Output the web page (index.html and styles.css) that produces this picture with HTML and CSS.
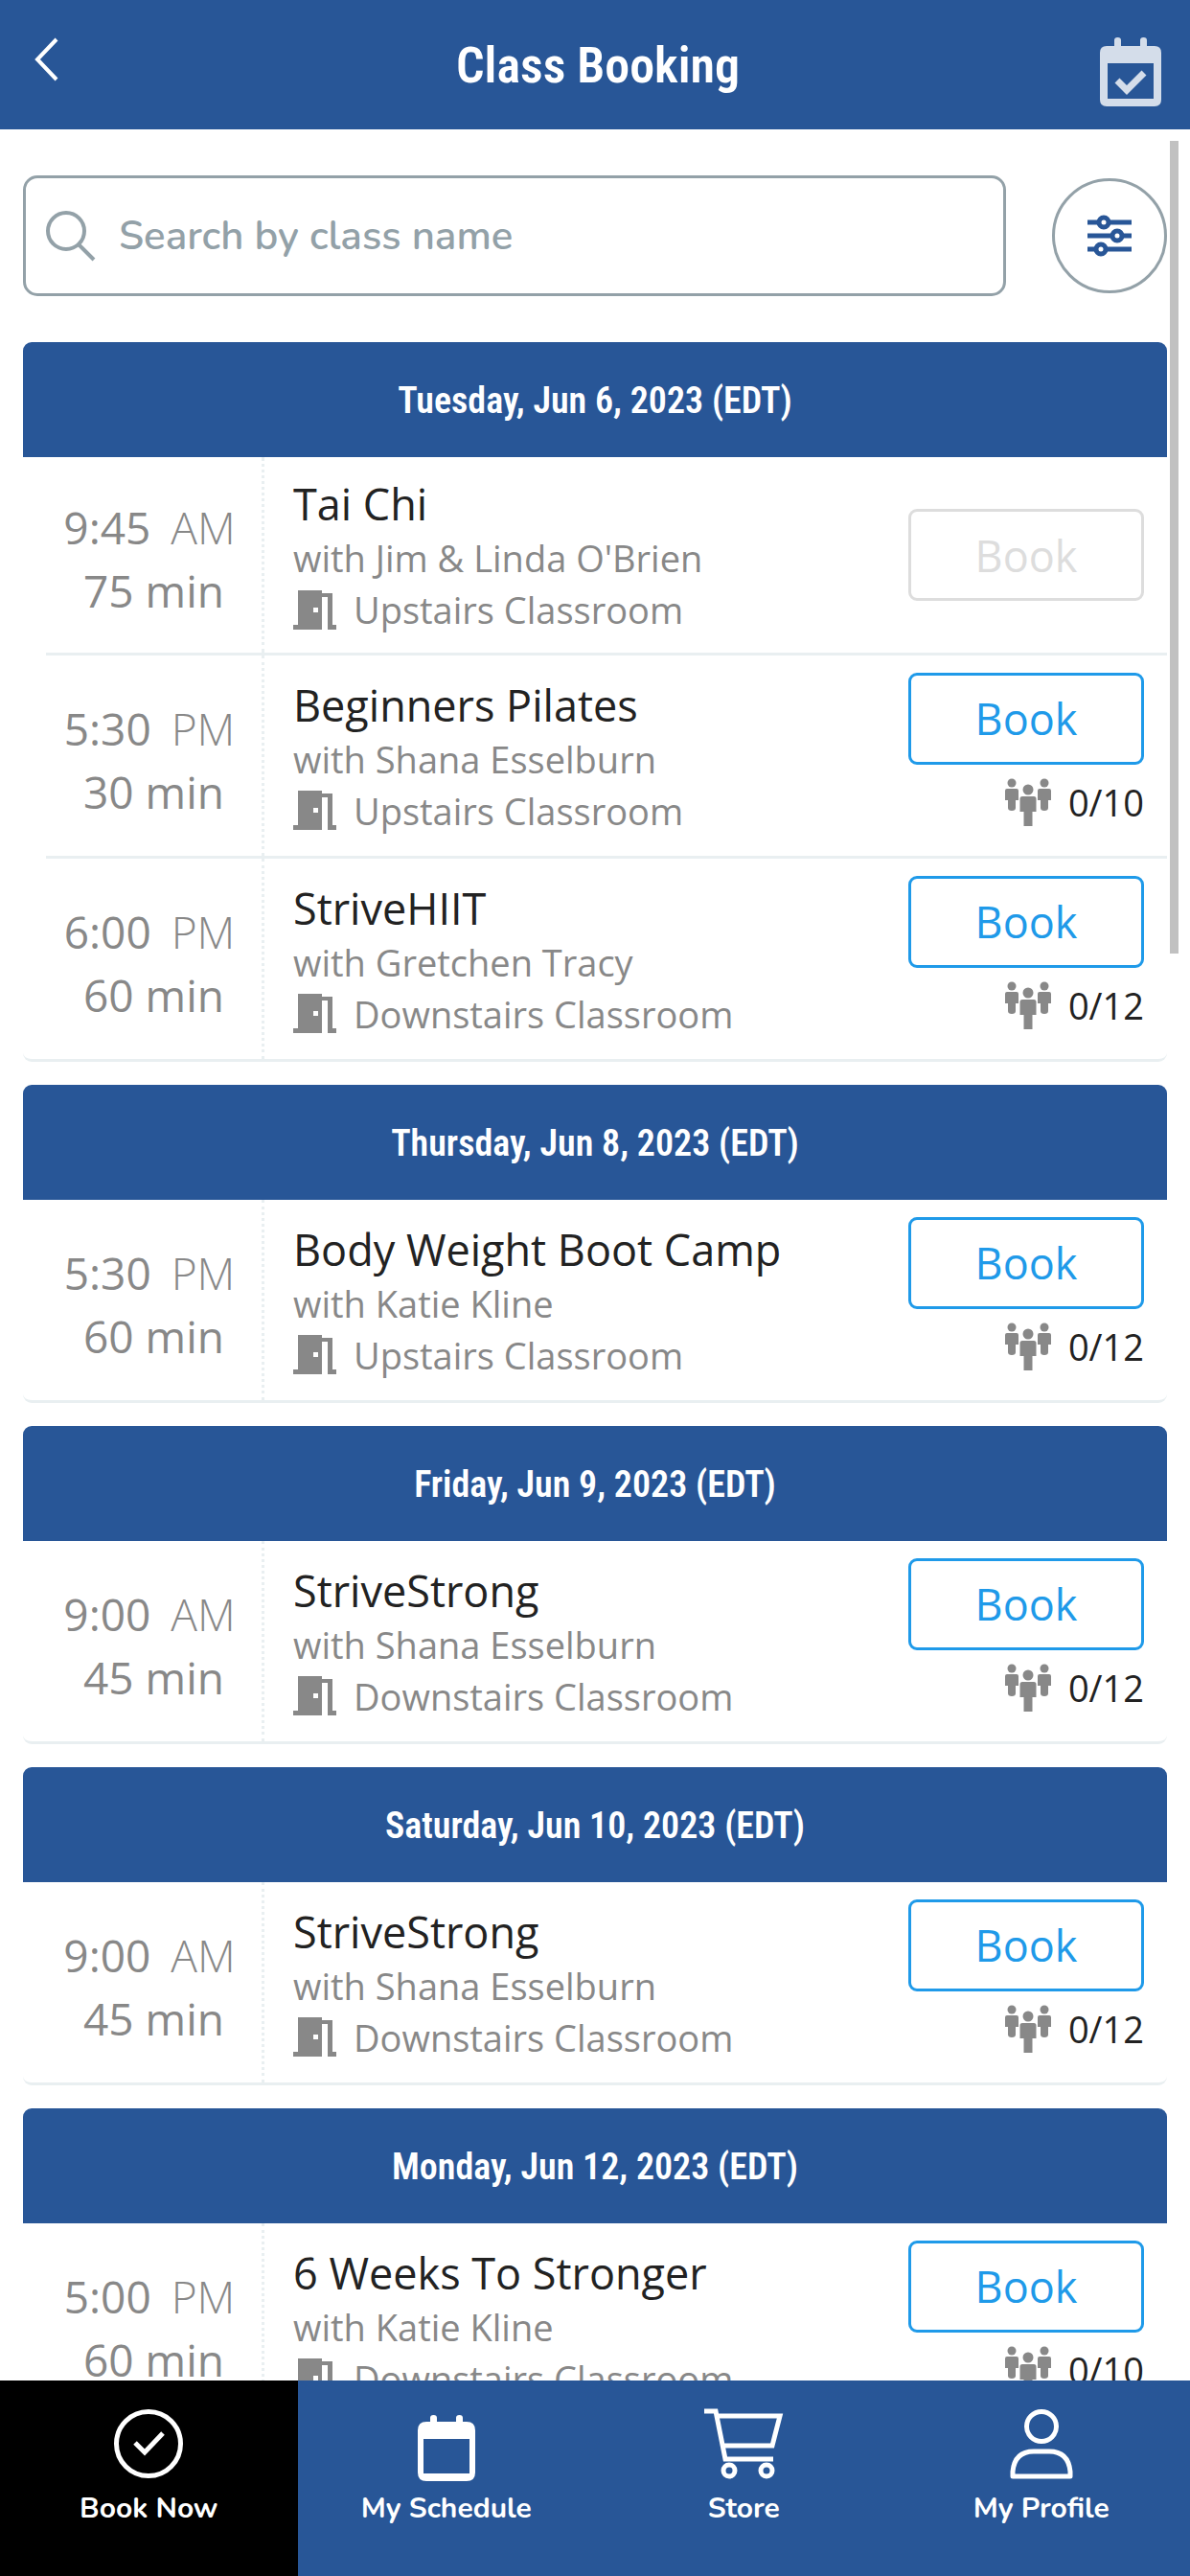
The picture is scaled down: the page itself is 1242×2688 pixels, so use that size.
FILE: index.html
```html
<!DOCTYPE html>
<html lang="en">
<head>
    <meta charset="UTF-8">
    <meta name="viewport" content="width=device-width, initial-scale=1.0">
    <title>Class Booking</title>
    <link rel="stylesheet" href="styles.css">
</head>
<body>
    <!-- Shared icons -->
    <svg class="sprite" aria-hidden="true">
        <symbol id="icon-door" viewBox="0 0 45 41">
            <path fill="currentColor" fill-rule="evenodd" d="M5 0H30V41H0V36H5ZM21 18V23H26V18Z"/>
            <path fill="currentColor" d="M30 3H41V36H45V41H36V7H30Z"/>
        </symbol>
        <symbol id="icon-people" viewBox="0 0 48 50">
            <g fill="currentColor">
                <circle cx="7" cy="5" r="4.5"/>
                <path d="M2 11H12Q14 11 14 13V23H11V31Q11 34 7 34Q3 34 3 31V23H0V13Q0 11 2 11Z"/>
                <circle cx="41" cy="5" r="4.5"/>
                <path d="M36 11H46Q48 11 48 13V23H45V31Q45 34 41 34Q37 34 37 31V23H34V13Q34 11 36 11Z"/>
                <circle cx="24" cy="12" r="5.5"/>
                <path d="M18 19H30Q32.500 19 32.500 21.500V35H28.500V50H19.500V35H15.500V21.500Q15.500 19 18 19Z"/>
            </g>
        </symbol>
    </svg>

    <div class="app">
        <header class="topbar">
            <button type="button" class="icon-btn" aria-label="Back">
                <svg width="25" height="46" viewBox="0 0 25 46" fill="none" stroke="currentColor" stroke-width="4"><path d="M23 2L3 23L23 44"/></svg>
            </button>
            <h1>Class Booking</h1>
            <button type="button" class="icon-btn calendar-btn" aria-label="My bookings">
                <svg width="64" height="72" viewBox="0 0 64 72">
                    <path fill="currentColor" fill-rule="evenodd" d="M15 9V3Q15 0 18.500 0T22 3V9H42V3Q42 0 45.500 0T49 3V9H57Q64 9 64 16V65Q64 72 57 72H7Q0 72 0 65V16Q0 9 7 9ZM8 27V64H56V27Z"/>
                    <path fill="none" stroke="currentColor" stroke-width="7" d="M18 45L28 55L46 37"/>
                </svg>
            </button>
        </header>

        <main class="content">
            <div class="search-row">
                <label class="search-box">
                    <svg width="52" height="54" viewBox="0 0 52 54" fill="none" stroke="currentColor" stroke-width="4"><circle cx="21" cy="22" r="19"/><path d="M34 36L50 52"/></svg>
                    <input type="text" placeholder="Search by class name" aria-label="Search by class name">
                </label>
                <button type="button" class="filter-btn" aria-label="Filters">
                    <svg width="46" height="42" viewBox="0 0 46 42" fill="none" stroke="currentColor" stroke-width="5">
                        <path d="M0 7H12M22 7H46M0 21H26M36 21H46M0 35H9M19 35H46"/>
                        <circle cx="17" cy="7" r="5"/>
                        <circle cx="31" cy="21" r="5"/>
                        <circle cx="14" cy="35" r="5"/>
                    </svg>
                </button>
            </div>

            <section class="day">
                <h2>Tuesday, Jun 6, 2023 (EDT)</h2>
                <article class="class-row unavailable">
                    <div class="time">
                        <p>9:45 <span class="ampm">AM</span></p>
                        <p>75 min</p>
                    </div>
                    <div class="info">
                        <h3>Tai Chi</h3>
                        <p>with Jim &amp; Linda O'Brien</p>
                        <p class="room"><svg class="door"><use href="#icon-door"/></svg>Upstairs Classroom</p>
                    </div>
                    <div class="action">
                        <button type="button" class="book-btn" disabled>Book</button>
                    </div>
                </article>
                <article class="class-row">
                    <div class="time">
                        <p>5:30 <span class="ampm">PM</span></p>
                        <p>30 min</p>
                    </div>
                    <div class="info">
                        <h3>Beginners Pilates</h3>
                        <p>with Shana Esselburn</p>
                        <p class="room"><svg class="door"><use href="#icon-door"/></svg>Upstairs Classroom</p>
                    </div>
                    <div class="action">
                        <button type="button" class="book-btn">Book</button>
                        <p class="spots"><svg class="people"><use href="#icon-people"/></svg>0/10</p>
                    </div>
                </article>
                <article class="class-row">
                    <div class="time">
                        <p>6:00 <span class="ampm">PM</span></p>
                        <p>60 min</p>
                    </div>
                    <div class="info">
                        <h3>StriveHIIT</h3>
                        <p>with Gretchen Tracy</p>
                        <p class="room"><svg class="door"><use href="#icon-door"/></svg>Downstairs Classroom</p>
                    </div>
                    <div class="action">
                        <button type="button" class="book-btn">Book</button>
                        <p class="spots"><svg class="people"><use href="#icon-people"/></svg>0/12</p>
                    </div>
                </article>
            </section>

            <section class="day">
                <h2>Thursday, Jun 8, 2023 (EDT)</h2>
                <article class="class-row">
                    <div class="time">
                        <p>5:30 <span class="ampm">PM</span></p>
                        <p>60 min</p>
                    </div>
                    <div class="info">
                        <h3>Body Weight Boot Camp</h3>
                        <p>with Katie Kline</p>
                        <p class="room"><svg class="door"><use href="#icon-door"/></svg>Upstairs Classroom</p>
                    </div>
                    <div class="action">
                        <button type="button" class="book-btn">Book</button>
                        <p class="spots"><svg class="people"><use href="#icon-people"/></svg>0/12</p>
                    </div>
                </article>
            </section>

            <section class="day">
                <h2>Friday, Jun 9, 2023 (EDT)</h2>
                <article class="class-row">
                    <div class="time">
                        <p>9:00 <span class="ampm">AM</span></p>
                        <p>45 min</p>
                    </div>
                    <div class="info">
                        <h3>StriveStrong</h3>
                        <p>with Shana Esselburn</p>
                        <p class="room"><svg class="door"><use href="#icon-door"/></svg>Downstairs Classroom</p>
                    </div>
                    <div class="action">
                        <button type="button" class="book-btn">Book</button>
                        <p class="spots"><svg class="people"><use href="#icon-people"/></svg>0/12</p>
                    </div>
                </article>
            </section>

            <section class="day">
                <h2>Saturday, Jun 10, 2023 (EDT)</h2>
                <article class="class-row">
                    <div class="time">
                        <p>9:00 <span class="ampm">AM</span></p>
                        <p>45 min</p>
                    </div>
                    <div class="info">
                        <h3>StriveStrong</h3>
                        <p>with Shana Esselburn</p>
                        <p class="room"><svg class="door"><use href="#icon-door"/></svg>Downstairs Classroom</p>
                    </div>
                    <div class="action">
                        <button type="button" class="book-btn">Book</button>
                        <p class="spots"><svg class="people"><use href="#icon-people"/></svg>0/12</p>
                    </div>
                </article>
            </section>

            <section class="day">
                <h2>Monday, Jun 12, 2023 (EDT)</h2>
                <article class="class-row">
                    <div class="time">
                        <p>5:00 <span class="ampm">PM</span></p>
                        <p>60 min</p>
                    </div>
                    <div class="info">
                        <h3>6 Weeks To Stronger</h3>
                        <p>with Katie Kline</p>
                        <p class="room"><svg class="door"><use href="#icon-door"/></svg>Downstairs Classroom</p>
                    </div>
                    <div class="action">
                        <button type="button" class="book-btn">Book</button>
                        <p class="spots"><svg class="people"><use href="#icon-people"/></svg>0/10</p>
                    </div>
                </article>
            </section>
        </main>
        <div class="scroll-thumb"></div>

        <nav class="tabbar">
            <a href="#book" class="tab active">
                <svg width="72" height="72" viewBox="0 0 72 72" fill="none" stroke="currentColor" stroke-width="5"><circle cx="36" cy="36" r="33.500"/><path d="M22 35L32 45L51 25"/></svg>
                Book Now
            </a>
            <a href="#schedule" class="tab">
                <svg width="60" height="72" viewBox="0 0 60 72"><path fill="currentColor" fill-rule="evenodd" d="M13 13V9Q13 6 16.500 6T20 9V13H40V9Q40 6 43.500 6T47 9V13H51Q60 13 60 22V66Q60 75 51 75H9Q0 75 0 66V22Q0 13 9 13ZM6 31V67H54V31Z"/></svg>
                My Schedule
            </a>
            <a href="#store" class="tab">
                <svg width="82" height="72" viewBox="0 0 82 72" fill="none" stroke="currentColor" stroke-width="5">
                    <path d="M0 2H12L22 52H72M13 7H79L71 38H20"/>
                    <circle cx="26" cy="64" r="6"/>
                    <circle cx="65" cy="64" r="6"/>
                </svg>
                Store
            </a>
            <a href="#profile" class="tab">
                <svg width="64" height="72" viewBox="0 0 64 72" fill="none" stroke="currentColor" stroke-width="5">
                    <circle cx="32" cy="18" r="15.500"/>
                    <path d="M2 70V65Q4 44 24 44H40Q60 44 62 65V70Z" stroke-linejoin="round"/>
                </svg>
                My Profile
            </a>
        </nav>
    </div>
</body>
</html>
```
FILE: styles.css
```css
* {
    margin: 0;
    padding: 0;
    box-sizing: border-box;
}

body {
    font-family: 'Open Sans', 'Noto Sans', sans-serif;
    background: #fff;
    color: #222;
}

button {
    font: inherit;
    background: none;
    border: none;
    cursor: pointer;
}

svg {
    display: block;
    flex: none;
    overflow: visible;
}

.sprite {
    position: absolute;
    width: 0;
    height: 0;
}

.app {
    position: relative;
    display: flex;
    flex-direction: column;
    height: 100vh;
}

/* Top bar */
.topbar {
    display: grid;
    grid-template-columns: 1fr auto 1fr;
    align-items: center;
    height: 135px;
    padding: 0 30px 0 36px;
    background: #285697;
    color: #fff;
    flex: none;
}

.topbar h1 {
    padding-top: 3px;
    font-family: 'Roboto Condensed', Roboto, sans-serif;
    font-size: 52px;
    font-weight: 600;
    line-height: 72px;
}

.icon-btn {
    justify-self: start;
    padding-bottom: 12px;
    color: #fff;
}

.calendar-btn {
    justify-self: end;
    padding: 15px 0 0;
    color: #d4ddea;
}

/* Scrolling list */
.content {
    flex: 1;
    min-height: 0;
    overflow-y: auto;
    scrollbar-width: none;
    padding: 48px 24px 0;
}

.scroll-thumb {
    position: absolute;
    top: 147px;
    right: 12px;
    width: 9px;
    height: 848px;
    background: #c1c1c1;
}

.search-row {
    display: flex;
    align-items: center;
    gap: 48px;
    margin-bottom: 48px;
}

.search-box {
    flex: 1;
    display: flex;
    align-items: center;
    gap: 24px;
    height: 126px;
    padding: 0 21px;
    border: 3px solid #93a1a8;
    border-radius: 15px;
    color: #93a1a8;
}

.search-box input {
    flex: 1;
    min-width: 0;
    border: none;
    outline: none;
    background: none;
    font-family: Nunito, 'Open Sans', sans-serif;
    font-size: 42px;
    font-weight: 600;
    color: #222;
}

.search-box input::placeholder {
    color: #93a1a8;
    opacity: 1;
}

.filter-btn {
    display: flex;
    align-items: center;
    justify-content: center;
    width: 120px;
    height: 120px;
    border: 3px solid #93a1a8;
    border-radius: 50%;
    color: #285697;
}

/* Day cards */
.day {
    margin-bottom: 24px;
    border-bottom: 3px solid #e9eff1;
    border-radius: 9px;
}

.day h2 {
    padding-top: 2px;
    border-radius: 9px 9px 0 0;
    background: #285697;
    color: #fff;
    font-family: 'Roboto Condensed', Roboto, sans-serif;
    font-size: 38px;
    font-weight: 600;
    line-height: 118px;
    text-align: center;
}

.class-row {
    display: flex;
    height: 209px;
    margin-left: 24px;
    padding-right: 24px;
}

.class-row + .class-row {
    height: 212px;
    border-top: 3px solid #e9eff1;
}

.class-row.unavailable {
    height: 204px;
}

.time {
    display: flex;
    flex-direction: column;
    justify-content: center;
    width: 228px;
    padding-top: 8px;
    border-right: 3px dotted #e9eff1;
    color: #888;
    font-size: 46px;
    line-height: 66px;
    text-align: center;
}

.ampm {
    margin: 0 9px;
    font-weight: 300;
}

.info {
    flex: 1;
    display: flex;
    flex-direction: column;
    justify-content: center;
    padding: 2px 0 0 30px;
    color: #888;
    font-size: 38px;
    line-height: 54px;
}

.info h3 {
    color: #222;
    font-size: 45px;
    font-weight: 400;
    line-height: 58px;
}

.room {
    display: flex;
    align-items: center;
    gap: 18px;
}

.door {
    width: 45px;
    height: 41px;
}

.action {
    display: flex;
    flex-direction: column;
    justify-content: center;
    width: 246px;
}

.book-btn {
    height: 96px;
    border: 3px solid #1f9ae9;
    border-radius: 9px;
    color: #1f9ae9;
    font-size: 45px;
}

.book-btn:disabled {
    border-color: #ddd;
    color: #ddd;
    cursor: default;
}

.spots {
    display: flex;
    align-items: center;
    justify-content: flex-end;
    gap: 18px;
    height: 78px;
    font-size: 38px;
}

.people {
    width: 48px;
    height: 50px;
    color: #888;
}

/* Bottom navigation */
.tabbar {
    display: grid;
    grid-template-columns: repeat(4, 1fr);
    height: 204px;
    background: #285697;
    flex: none;
    position: relative;
}

.tab {
    display: flex;
    flex-direction: column;
    align-items: center;
    gap: 12px;
    padding-top: 30px;
    color: #fff;
    font-family: Nunito, 'Open Sans', sans-serif;
    font-size: 30px;
    font-weight: 700;
    line-height: 40px;
    text-decoration: none;
}

.tab.active {
    background: #000;
}
```
